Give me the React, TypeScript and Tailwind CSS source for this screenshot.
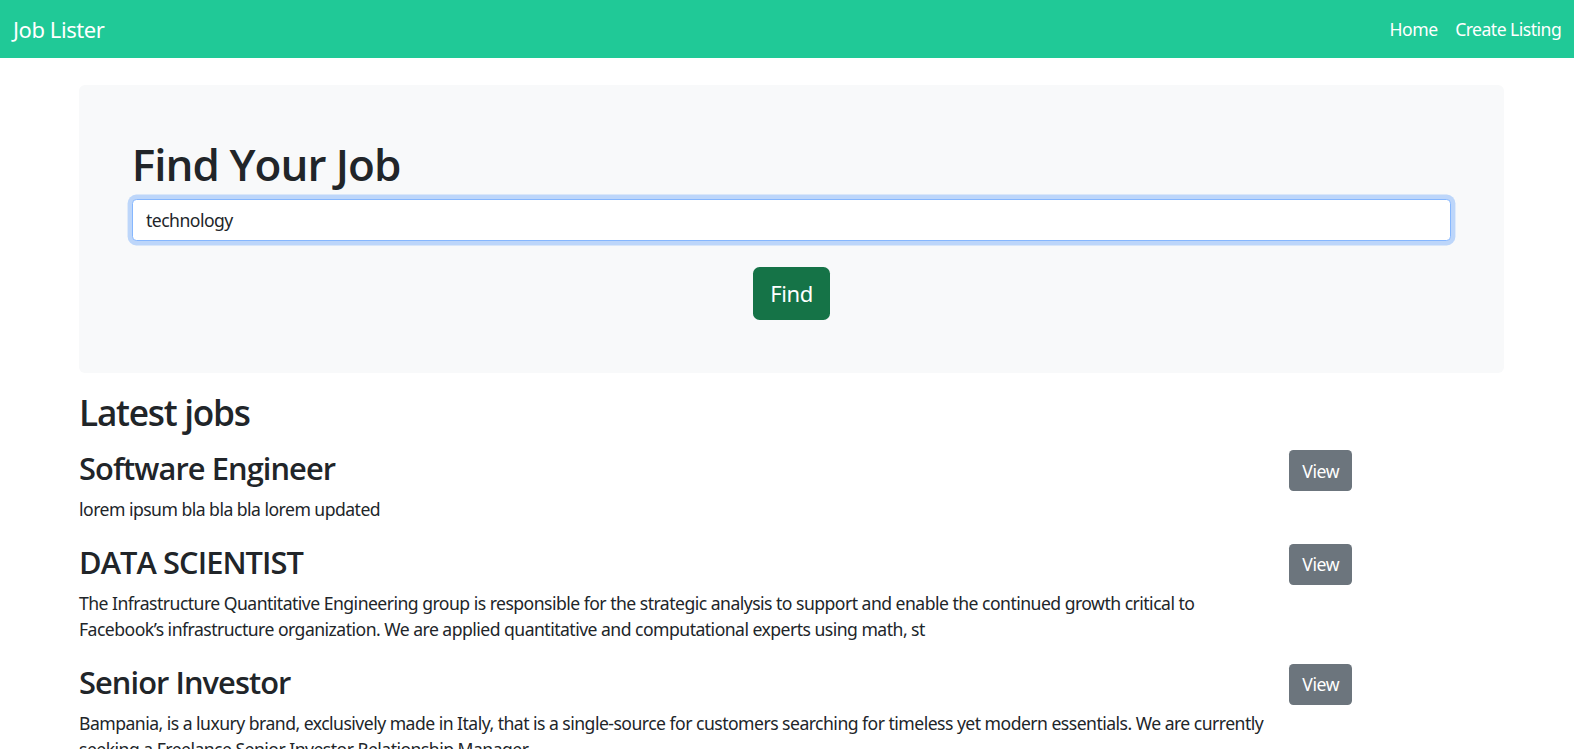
import React from "react";

const jobs = [
  {
    title: "Software Engineer",
    body: "lorem ipsum bla bla bla lorem updated",
  },
  {
    title: "DATA SCIENTIST",
    body: "The Infrastructure Quantitative Engineering group is responsible for the strategic analysis to support and enable the continued growth critical to Facebook’s infrastructure organization. We are applied quantitative and computational experts using math, st",
  },
  {
    title: "Senior Investor",
    body: "Bampania, is a luxury brand, exclusively made in Italy, that is a single-source for customers searching for timeless yet modern essentials. We are currently seeking a Freelance Senior Investor Relationship Manager",
  },
];

function Navbar() {
  return (
    <nav className="h-[58px] bg-[#20c997] flex items-center justify-between pl-[13px] pr-[4px]">
      <a className="text-[22px] text-white leading-none tracking-[-0.02em]">Job Lister</a>
      <ul className="flex items-center">
        <li>
          <a className="px-[8.8px] text-[17.6px] text-white tracking-[-0.03em]">Home</a>
        </li>
        <li>
          <a className="px-[8.8px] text-[17.6px] text-white tracking-[-0.03em]">Create Listing</a>
        </li>
      </ul>
    </nav>
  );
}

function SearchPanel() {
  return (
    <div className="mt-[27px] bg-[#f8f9fa] rounded-[6px] p-[52.8px] pb-[53px]">
      <h1 className="font-['Open_Sans',sans-serif] text-[44px] leading-[1.2] font-semibold tracking-[-0.022em] mb-[8.8px]">
        Find Your Job
      </h1>
      <input
        defaultValue="technology"
        className="block w-full h-[41.8px] px-[13.2px] text-[17.6px] tracking-[-0.03em] bg-white border-[1.1px] border-[#86b7fe] rounded-[4.4px] shadow-[0_0_0_4.4px_rgba(13,110,253,0.25)] outline-none text-[#212529]"
      />
      <div className="flex justify-center mt-[26px]">
        <button className="h-[52.8px] px-[17.6px] text-[22px] tracking-[-0.02em] text-white bg-[#157347] rounded-[6.6px]">
          Find
        </button>
      </div>
    </div>
  );
}

function JobRow({ title, body }: { title: string; body: string }) {
  return (
    <div className="flex items-start mb-[4px]">
      <div className="w-[1195px]">
        <h3 className="font-['Open_Sans',sans-serif] text-[30.8px] leading-[1.2] font-semibold tracking-[-0.03em] mb-[8.8px]">
          {title}
        </h3>
        <p className="text-[17.6px] leading-[26.4px] tracking-[-0.03em] mb-[17.6px]">{body}</p>
      </div>
      <button className="ml-[15px] h-[41px] px-[13.2px] text-[17.6px] tracking-[-0.02em] text-white bg-[#6c757d] rounded-[4.4px]">
        View
      </button>
    </div>
  );
}

export default function App() {
  return (
    <div className="min-h-screen bg-white text-[#212529] font-['Noto_Sans',sans-serif]">
      <Navbar />
      <main className="ml-[79px] w-[1425px]">
        <SearchPanel />
        <h2 className="font-['Open_Sans',sans-serif] mt-[18px] text-[35.2px] leading-[1.2] font-semibold tracking-[-0.035em] mb-[17px]">
          Latest jobs
        </h2>
        {jobs.map((job) => (
          <JobRow key={job.title} title={job.title} body={job.body} />
        ))}
      </main>
    </div>
  );
}
